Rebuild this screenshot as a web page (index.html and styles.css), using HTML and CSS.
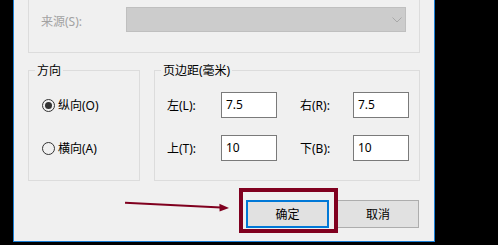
FILE: index.html
```html
<!DOCTYPE html>
<html lang="zh-CN">
<head>
<meta charset="utf-8">
<title>页面设置</title>
<link rel="stylesheet" href="styles.css">
</head>
<body>
<div class="dialog">
  <div class="group source">
    <span class="field-label disabled">来源(S):</span>
    <div class="combo">
      <svg class="chevron" width="10" height="6" viewBox="0 0 10 6"><polyline points="0.5,0.5 5,5 9.5,0.5" fill="none" stroke="#a8a8a8" stroke-width="1"/></svg>
    </div>
  </div>
  <div class="groups">
    <div class="group orient">
      <div class="group-title">方向</div>
      <div class="rows">
        <label class="row"><span class="radio-mark checked"></span>纵向(O)</label>
        <label class="row"><span class="radio-mark"></span>横向(A)</label>
      </div>
    </div>
    <div class="group margins">
      <div class="group-title">页边距(毫米)</div>
      <div class="rows">
        <div class="row"><span class="mlabel">左(L):</span><span class="input">7.5</span><span class="mlabel second">右(R):</span><span class="input">7.5</span></div>
        <div class="row"><span class="mlabel">上(T):</span><span class="input">10</span><span class="mlabel second">下(B):</span><span class="input">10</span></div>
      </div>
    </div>
  </div>
  <div class="buttons">
    <button class="btn default">确定</button>
    <button class="btn">取消</button>
  </div>
</div>
<div class="highlight"></div>
<svg class="arrow" width="498" height="245" viewBox="0 0 498 245">
  <line x1="125" y1="202.8" x2="221" y2="207.6" stroke="#80001f" stroke-width="2"/>
  <polygon points="229,208.1 219.4,203.8 219.6,211.6" fill="#80001f"/>
</svg>
</body>
</html>
```

FILE: styles.css
```css
html, body {
  margin: 0;
  padding: 0;
}
body {
  background: #000;
  width: 498px;
  height: 245px;
  overflow: hidden;
  position: relative;
  font-family: "Noto Sans", "Noto Sans CJK SC", sans-serif;
  font-size: 12px;
  color: #000;
}
.dialog {
  margin-left: 13px;
  width: 392px;
  height: 241px;
  padding: 0 14px;
  background: #f0f0f0;
  border: 1px solid #1a7fd6;
  border-top: none;
}
.group {
  box-sizing: border-box;
  border: 1px solid #dcdcdc;
}
.source {
  height: 53px;
  border-top: none;
  display: flex;
  align-items: flex-start;
  padding-left: 12px;
}
.field-label {
  width: 85px;
  line-height: 16px;
  padding-top: 14px;
}
.disabled {
  color: #a2a2a2;
}
.combo {
  box-sizing: border-box;
  margin-top: 7px;
  width: 280px;
  height: 25px;
  background: #cccccc;
  border: 1px solid #bfbfbf;
  display: flex;
  justify-content: flex-end;
  align-items: center;
  padding-right: 3px;
}
.chevron {
  display: block;
  margin-top: 1px;
}
.groups {
  margin-top: 17px;
  display: flex;
  gap: 14px;
}
.orient {
  width: 112px;
  height: 111px;
}
.margins {
  width: 266px;
  height: 111px;
}
.group-title {
  width: fit-content;
  margin: -8px 0 0 6px;
  padding: 0 2px;
  line-height: 16px;
  background: #f0f0f0;
}
.rows {
  margin-top: 13px;
  display: flex;
  flex-direction: column;
  gap: 17px;
}
.row {
  height: 26px;
  display: flex;
  align-items: center;
}
.orient .row {
  padding-left: 13px;
}
.margins .row {
  padding-left: 12px;
}
.radio-mark {
  box-sizing: border-box;
  width: 13px;
  height: 13px;
  margin-right: 3px;
  border: 1px solid #333;
  border-radius: 50%;
  display: flex;
  align-items: center;
  justify-content: center;
}
.radio-mark.checked::after {
  content: "";
  width: 7px;
  height: 7px;
  border-radius: 50%;
  background: #333;
}
.mlabel {
  width: 54px;
}
.mlabel.second {
  width: 53px;
  margin-left: 23px;
}
.input {
  box-sizing: border-box;
  width: 56px;
  height: 26px;
  padding-left: 4px;
  line-height: 23px;
  background: #fff;
  border: 1px solid #7a7a7a;
}
.buttons {
  margin-top: 19px;
  display: flex;
  justify-content: flex-end;
  gap: 8px;
  padding-right: 1px;
}
.btn {
  box-sizing: border-box;
  width: 82px;
  height: 28px;
  margin: 0;
  padding: 0;
  font: inherit;
  color: #000;
  background: #e1e1e1;
  border: 1px solid #adadad;
}
.btn.default {
  width: 83px;
  border: 2px solid #0078d7;
}
.highlight {
  position: absolute;
  left: 239px;
  top: 188px;
  width: 99px;
  height: 45px;
  box-sizing: border-box;
  border: 4px solid #80001f;
}
.arrow {
  position: absolute;
  left: 0;
  top: 0;
  pointer-events: none;
}
```
